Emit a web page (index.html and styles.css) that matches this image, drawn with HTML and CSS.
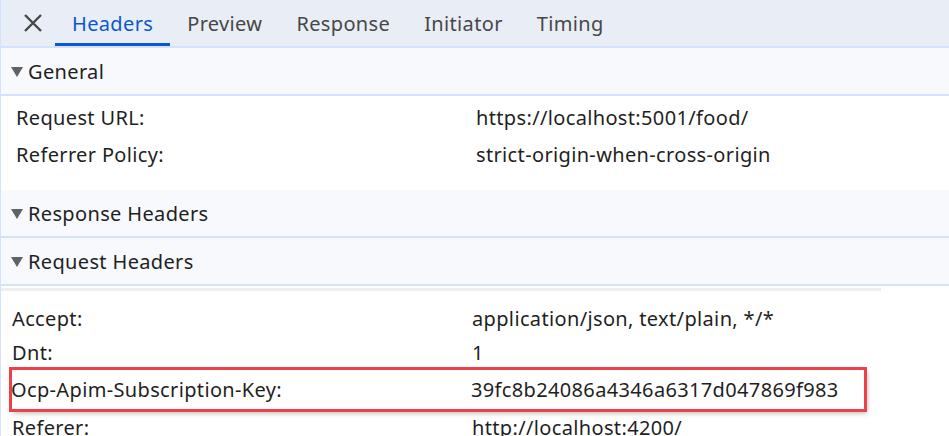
FILE: index.html
```html
<!DOCTYPE html>
<html>
<head>
<meta charset="utf-8">
<link rel="stylesheet" href="styles.css">
</head>
<body>
<div class="panel">
  <div class="tabs">
    <div class="close">
      <svg width="20" height="20" viewBox="0 0 20 20"><path d="M2 2 L18 18 M18 2 L2 18" stroke="#474747" stroke-width="2.4" fill="none"/></svg>
    </div>
    <div class="tab active">Headers</div>
    <div class="tab">Preview</div>
    <div class="tab">Response</div>
    <div class="tab">Initiator</div>
    <div class="tab">Timing</div>
  </div>
  <div class="sec-head"><span class="tri"></span>General</div>
  <div class="sec-body general">
    <div class="row"><div class="key">Request URL:</div><div class="val">https://localhost:5001/food/</div></div>
    <div class="row"><div class="key">Referrer Policy:</div><div class="val">strict-origin-when-cross-origin</div></div>
  </div>
  <div class="sec-head"><span class="tri"></span>Response Headers</div>
  <div class="sec-head"><span class="tri"></span>Request Headers</div>
  <div class="scrollbar"></div>
  <div class="sec-body req">
    <div class="row"><div class="key">Accept:</div><div class="val">application/json, text/plain, */*</div></div>
    <div class="row"><div class="key">Dnt:</div><div class="val">1</div></div>
    <div class="row highlight"><div class="key">Ocp-Apim-Subscription-Key:</div><div class="val">39fc8b24086a4346a6317d047869f983</div></div>
    <div class="row"><div class="key">Referer:</div><div class="val">http://localhost:4200/</div></div>
  </div>
</div>
</body>
</html>
```
FILE: styles.css
```css
html, body {
  margin: 0;
  padding: 0;
  background: #ffffff;
  overflow: hidden;
}
body {
  font-family: "Noto Sans", "Open Sans", sans-serif;
  font-size: 20px;
  letter-spacing: 0.35px;
  color: #1f1f1f;
  width: 949px;
  height: 436px;
}
.panel {
  border-left: 1px solid #d3e3fd;
  height: 436px;
}
.tabs {
  display: flex;
  align-items: stretch;
  height: 46px;
  background: #e9eef6;
  border-bottom: 2px solid #d3e3fd;
}
.close {
  width: 54px;
  display: flex;
  align-items: center;
  justify-content: center;
  padding-left: 10px;
  box-sizing: border-box;
}
.tab {
  display: flex;
  align-items: center;
  padding: 0 17px;
  color: #474747;
}
.tab.active {
  color: #0b57d0;
  box-shadow: inset 0 -3px 0 #0b57d0;
}
.sec-head {
  height: 46px;
  display: flex;
  align-items: center;
  padding-left: 10px;
  background: #f7f9fd;
  border-bottom: 2px solid #d3e3fd;
}
.tri {
  width: 0;
  height: 0;
  border-left: 6.5px solid transparent;
  border-right: 6.5px solid transparent;
  border-top: 10px solid #5f6368;
  margin-right: 5px;
  margin-top: 2px;
}
.sec-body.general {
  padding: 3px 0 17px 15px;
}
.row {
  display: flex;
  align-items: center;
  height: 37px;
}
.key {
  width: 460px;
  flex: none;
}
.sec-body.req {
  padding: 10px 0 0 11px;
}
.sec-body.req .row {
  height: 34px;
}
.sec-body.req .row.highlight {
  height: 41px;
}
.sec-body.req .key {
  width: 460px;
}
.scrollbar {
  width: 880px;
  height: 3px;
  background: #eeeeee;
  margin-top: 2px;
}
.highlight {
  outline: 3px solid #ee4049;
  outline-offset: -1px;
  box-shadow: 2px 3px 5px rgba(0,0,0,0.3);
  margin-left: -1px;
  width: 854px;
}
```
